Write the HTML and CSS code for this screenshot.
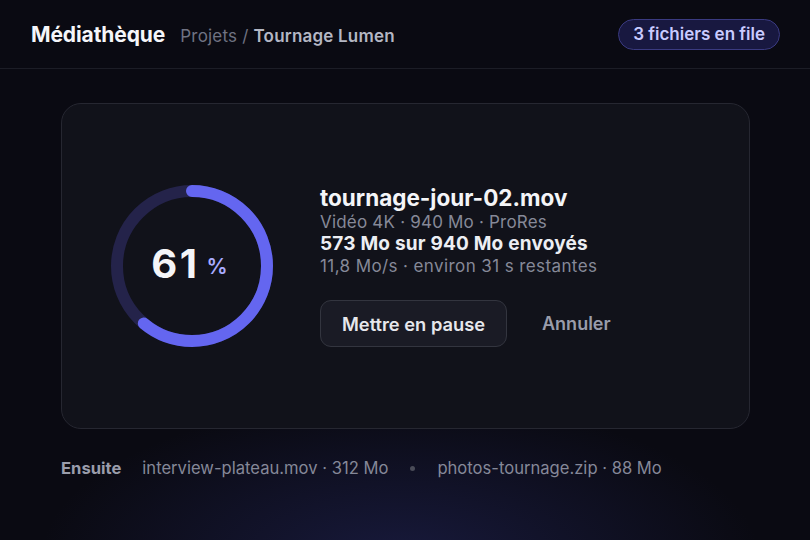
FILE: index.html
```html
<!DOCTYPE html>
<html lang="fr">
<head>
<meta charset="utf-8">
<link rel="stylesheet" href="styles.css">
</head>
<body>
<div class="page">
  <header class="topbar">
    <div class="crumbs">
      <h1 class="title">Médiathèque</h1>
      <span class="path">Projets / <b>Tournage Lumen</b></span>
    </div>
    <span class="badge">3 fichiers en file</span>
  </header>
  <main class="main">
    <section class="card">
      <div class="ring">
        <svg width="164" height="164" viewBox="0 0 164 164">
          <circle cx="82" cy="82" r="75" fill="none" stroke="#24234a" stroke-width="12"/>
          <circle cx="82" cy="82" r="75" fill="none" stroke="#6466f0" stroke-width="12" stroke-linecap="round"
            stroke-dasharray="287.5 471.24" transform="rotate(-90 82 82)"/>
        </svg>
        <div class="pct"><span class="num">61</span><span class="unit">%</span></div>
      </div>
      <div class="info">
        <div class="fname">tournage-jour-02.mov</div>
        <div class="meta">Vidéo 4K · 940 Mo · ProRes</div>
        <div class="progress">573 Mo sur 940 Mo envoyés</div>
        <div class="meta meta-wide">11,8 Mo/s · environ 31 s restantes</div>
        <div class="actions">
          <button class="btn">Mettre en pause</button>
          <button class="link">Annuler</button>
        </div>
      </div>
    </section>
    <div class="next">
      <span class="next-label">Ensuite</span>
      <span>interview-plateau.mov · 312 Mo</span>
      <span class="dot"></span>
      <span>photos-tournage.zip · 88 Mo</span>
    </div>
  </main>
</div>
</body>
</html>
```
FILE: styles.css
```css
* { box-sizing: border-box; }
html, body { margin: 0; height: 100%; }
body {
  font-family: Inter, "Noto Sans", sans-serif;
  background: #0a0a12;
  color: #f2f3f7;
  overflow: hidden;
}
.page {
  width: 810px;
  height: 540px;
  background:
    radial-gradient(ellipse 360px 160px at 400px 560px, rgba(40, 44, 110, 0.45), rgba(20, 20, 50, 0) 100%),
    #0a0a12;
}
.topbar {
  height: 69px;
  display: flex;
  align-items: center;
  justify-content: space-between;
  padding: 0 30px 0 31px;
  border-bottom: 1px solid #1c1d26;
}
.crumbs { display: flex; align-items: baseline; gap: 15px; }
.title {
  margin: 0;
  font-size: 21px;
  font-weight: 700;
  color: #f5f6fa;
  letter-spacing: -0.1px;
}
.path { font-size: 17px; color: #6f7282; letter-spacing: 0.2px; }
.path b { color: #b4b7c4; font-weight: 600; }
.badge {
  height: 31px;
  padding: 0 14px;
  display: flex;
  align-items: center;
  border-radius: 16px;
  background: #181840;
  border: 1px solid #3a3a80;
  color: #c9cbff;
  font-size: 17px;
  font-weight: 600;
}
.main { padding: 34px 61px 0 61px; }
.card {
  height: 326px;
  width: 689px;
  border-radius: 20px;
  background: #11121a;
  border: 1px solid #262731;
  display: flex;
  align-items: center;
  padding: 0 0 0 48px;
  gap: 46px;
}
.ring { position: relative; width: 164px; height: 164px; flex: none; }
.ring svg { display: block; }
.pct {
  position: absolute;
  inset: 0;
  text-align: center;
  padding-top: 60px;
  padding-right: 5px;
  line-height: 1;
  white-space: nowrap;
}
.num { font-size: 40px; font-weight: 700; color: #f4f5f8; letter-spacing: 2.5px; }
.unit { font-size: 21px; font-weight: 600; color: #a9abff; margin-left: 7px; vertical-align: 4px; }
.info { display: flex; flex-direction: column; }
.fname { font-size: 22.5px; font-weight: 700; color: #f4f5f8; line-height: 26px; }
.meta { font-size: 17px; color: #868998; line-height: 22px; letter-spacing: 0.2px; }
.meta-wide { letter-spacing: 0.4px; }
.progress { font-size: 19px; font-weight: 700; color: #eceef3; line-height: 22px; letter-spacing: 0.2px; }
.actions { display: flex; align-items: center; gap: 35px; margin-top: 23px; }
.btn {
  font-family: inherit;
  height: 47px;
  padding: 0 21px;
  border-radius: 11px;
  background: #1a1b25;
  border: 1px solid #33353f;
  color: #e6e7ec;
  font-size: 18.3px;
  font-weight: 600;
}
.link {
  font-family: inherit;
  background: none;
  border: 0;
  padding: 0;
  color: #999cab;
  font-size: 18px;
  font-weight: 600;
}
.next {
  display: flex;
  align-items: center;
  gap: 21px;
  margin-top: 29px;
  font-size: 16.6px;
  color: #858898;
}
.next-label { font-weight: 700; color: #9a9dab; }
.dot { width: 5px; height: 5px; border-radius: 50%; background: #4a4c58; margin: 0 1px; }
```
